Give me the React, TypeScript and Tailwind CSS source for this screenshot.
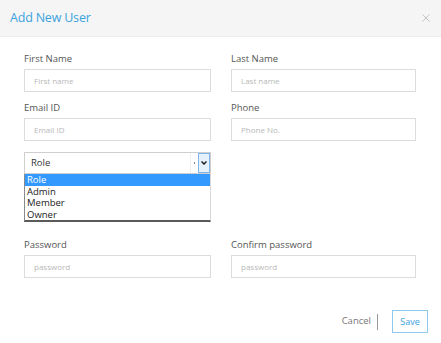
export default function App() {
  const font = { fontFamily: '"Open Sans", "Noto Sans", sans-serif' };
  return (
    <div className="w-[441px] h-[343px] bg-white flex flex-col" style={font}>
      {/* Header */}
      <div className="h-[37px] bg-[#f5f5f5] border-b border-[#ececec] flex items-center justify-between pl-[10px] pr-[11px]">
        <h1 className="text-[12.5px] text-[#3aa3dd] tracking-[-0.2px]">Add New User</h1>
        <svg width="8" height="8" viewBox="0 0 8 8" className="text-[#c4c4c4]">
          <path d="M0.5 0.5L7.5 7.5M7.5 0.5L0.5 7.5" stroke="currentColor" strokeWidth="1" />
        </svg>
      </div>

      {/* Form */}
      <div className="flex-1 px-[24px] pt-[16px]">
        <div className="grid grid-cols-[187px_185px] gap-x-[20px] gap-y-[10px]">
          <Field label="First Name" placeholder="First name" />
          <Field label="Last Name" placeholder="Last name" />
          <Field label="Email ID" placeholder="Email ID" />
          <Field label="Phone" placeholder="Phone No." />
        </div>

        {/* Role select (open) */}
        <div className="relative w-[187px] mt-[11px]">
          <div className="h-[22px] border border-[#cfcfcf] bg-white flex items-center">
            <span className="flex-1 pl-[6px] text-[9.5px] text-[#333]">Role</span>
            <span className="w-px h-full bg-[#eeeeee]" />
            <span className="w-[7px] flex items-center justify-center">
              <span className="w-[1.5px] h-[1.5px] bg-[#888]" />
            </span>
            <span className="w-[12px] h-[20px] bg-[#e5f1fb] border border-[#7eb4ea] flex items-center justify-center">
              <svg width="6" height="4" viewBox="0 0 6 4">
                <path d="M0.5 0.5L3 3L5.5 0.5" stroke="#222" strokeWidth="1.5" fill="none" />
              </svg>
            </span>
          </div>
          <div className="absolute left-0 top-[22px] w-[187px] bg-white border-l border-[#8a8a8a] border-r border-r-[#d8d8d8] border-b-2 border-b-[#5a5a5a] text-[9.5px] leading-[11.5px] text-[#222]">
            <div className="bg-[#3399ff] text-white pl-[2px]">Role</div>
            <div className="pl-[2px]">Admin</div>
            <div className="pl-[2px]">Member</div>
            <div className="pl-[2px]">Owner</div>
          </div>
        </div>

        <div className="grid grid-cols-[187px_185px] gap-x-[20px] mt-[65px]">
          <Field label="Password" placeholder="password" />
          <Field label="Confirm password" placeholder="password" />
        </div>
      </div>

      {/* Footer */}
      <div className="h-[43px] flex items-start justify-end pr-[13px] pt-[10px]">
        <div className="flex items-center h-[23px]">
          <span className="text-[9.5px] text-[#777]">Cancel</span>
          <span className="w-px h-[16px] bg-[#999] ml-[6px] mr-[14px]" />
          <button className="w-[36px] h-[23px] border border-[#8ccaec] text-[9px] text-[#3aa3dd] bg-white">
            Save
          </button>
        </div>
      </div>
    </div>
  );
}

function Field({ label, placeholder }: { label: string; placeholder: string }) {
  return (
    <div className="flex flex-col">
      <label className="text-[9.5px] leading-[12px] text-[#555] mb-[4px]">{label}</label>
      <input
        placeholder={placeholder}
        className="h-[23px] border border-[#dcdcdc] px-[9px] text-[8px] placeholder:text-[#b8b8b8] outline-none"
      />
    </div>
  );
}
